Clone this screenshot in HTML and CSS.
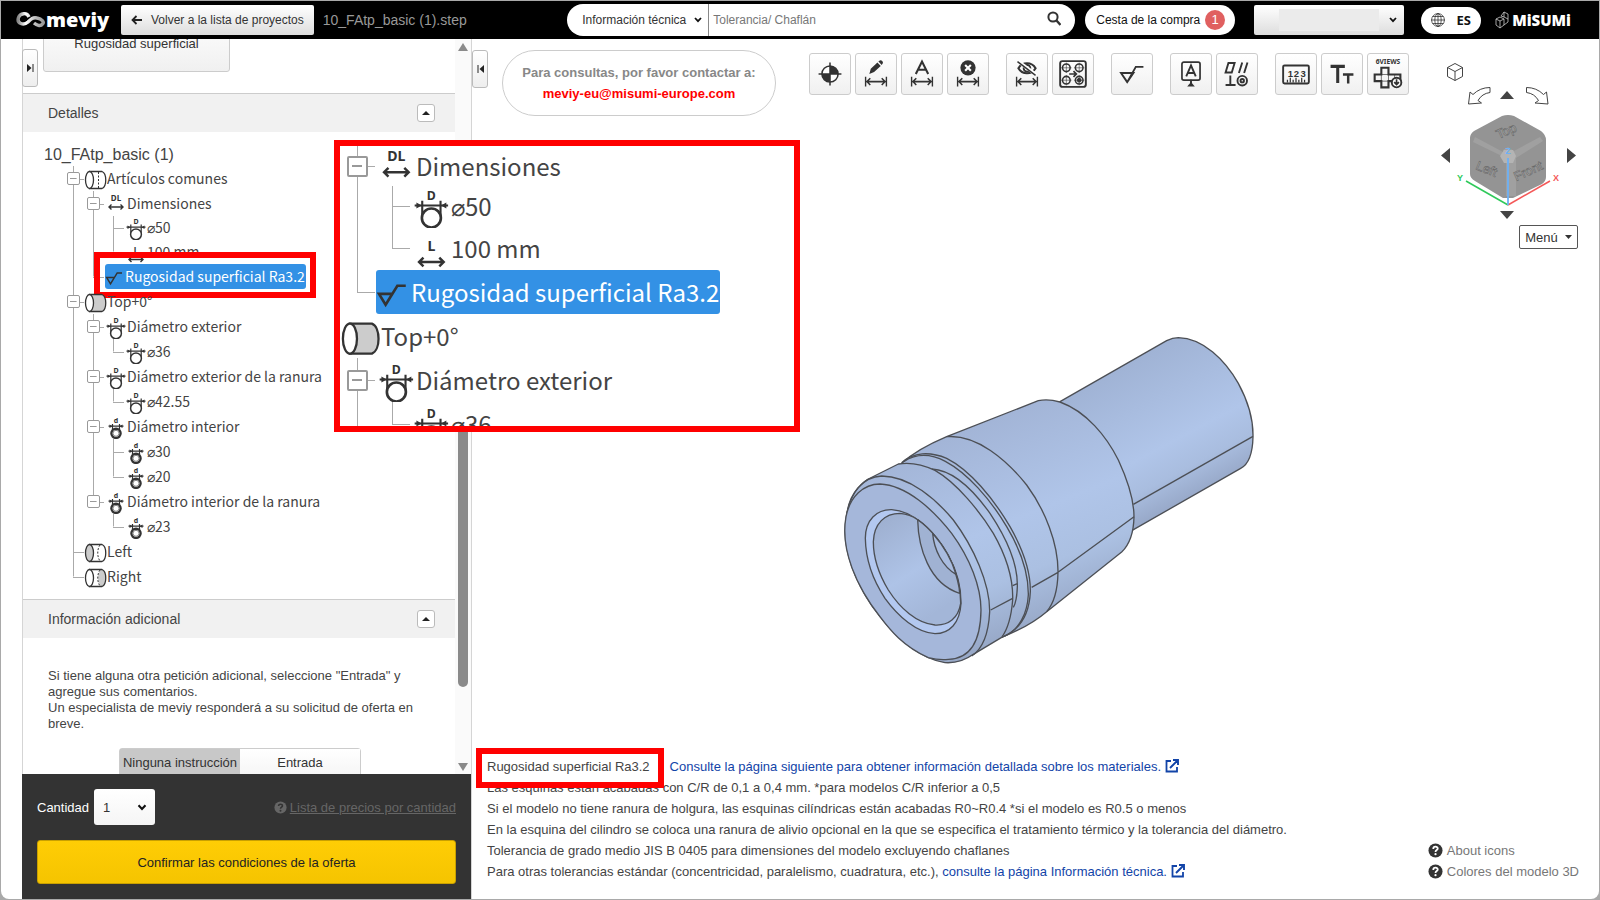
FILE: index.html
```html
<!DOCTYPE html>
<html lang="es">
<head>
    <meta charset="UTF-8">
    <meta name="viewport" content="width=device-width, initial-scale=1.0">
    <title>meviy</title>
    <link rel="stylesheet" href="styles.css">
</head>
<body>
    <!-- shared icons -->
    <svg class="defs" width="0" height="0">
        <defs>
            <symbol id="i-d-out" viewBox="0 0 23 25">
                <text x="12" y="9" class="glyph">D</text>
                <path d="M2.5 12.2h19M6.8 9.5v10M17.2 9.5v10" fill="none" stroke="#333" stroke-width="1.2"/>
                <path d="M3.5 10.5l3 1.7-3 1.7zM20.5 10.5l-3 1.7 3 1.7z" fill="#333"/>
                <circle cx="12" cy="19.3" r="5.4" fill="#fff" stroke="#333" stroke-width="1.5"/>
            </symbol>
            <symbol id="i-d-in" viewBox="0 0 23 25">
                <text x="12" y="9" class="glyph">d</text>
                <path d="M4.5 12.2h15M8.5 10v9M15.5 10v9" fill="none" stroke="#333" stroke-width="1.2"/>
                <path d="M5.5 10.5l3 1.7-3 1.7zM18.5 10.5l-3 1.7 3 1.7z" fill="#333"/>
                <circle cx="12" cy="19.3" r="4.6" fill="#fff" stroke="#333" stroke-width="2.4"/>
                <circle cx="12" cy="19.3" r="3" fill="none" stroke="#888" stroke-width="1"/>
            </symbol>
            <symbol id="i-dl" viewBox="0 0 23 25">
                <text x="12" y="9.5" class="glyph glyph-l">DL</text>
                <path d="M5 16h14M7.5 13.5L5 16l2.5 2.5M16.5 13.5L19 16l-2.5 2.5" fill="none" stroke="#333" stroke-width="1.4"/>
            </symbol>
            <symbol id="i-l" viewBox="0 0 23 25">
                <text x="12" y="14" class="glyph glyph-l">L</text>
                <path d="M5 20.5h14M7.5 18L5 20.5 7.5 23M16.5 18l2.5 2.5-2.5 2.5" fill="none" stroke="#333" stroke-width="1.4"/>
            </symbol>
            <symbol id="i-rough" viewBox="0 0 20 25">
                <path d="M5.5 19.8L1.7 13.6h7.6zL12.2 8.9H17" fill="none" stroke="#333" stroke-width="1.5"/>
            </symbol>
            <symbol id="i-cyl" viewBox="0 0 23 25">
                <path d="M5.5 5.5H18c5 2 5 15 0 17H5.5z" fill="#fff" stroke="#333" stroke-width="1.3"/>
                <path d="M14.5 6v16" stroke="#333" stroke-width="1" stroke-dasharray="2 1.5"/>
                <ellipse cx="5.5" cy="14" rx="4" ry="8.5" fill="#fff" stroke="#333" stroke-width="1.3"/>
            </symbol>
            <symbol id="i-cyl-top" viewBox="0 0 23 25">
                <path d="M5.5 5.5H18c5 2 5 15 0 17H5.5z" fill="#ccc" stroke="#333" stroke-width="1.3"/>
                <ellipse cx="5.5" cy="14" rx="4" ry="8.5" fill="#fff" stroke="#333" stroke-width="1.3"/>
            </symbol>
            <symbol id="i-cyl-left" viewBox="0 0 23 25">
                <path d="M5.5 5.5H18c5 2 5 15 0 17H5.5z" fill="#fff" stroke="#333" stroke-width="1.3"/>
                <path d="M16 6c-3 4-3 12 0 16" fill="none" stroke="#333" stroke-width="1" stroke-dasharray="2 1.5"/>
                <ellipse cx="5.5" cy="14" rx="4" ry="8.5" fill="#ccc" stroke="#333" stroke-width="1.3"/>
            </symbol>
            <symbol id="i-cyl-right" viewBox="0 0 23 25">
                <path d="M5.5 5.5H18c5 2 5 15 0 17H5.5z" fill="#fff"/>
                <ellipse cx="18" cy="14" rx="4" ry="8.5" fill="#ccc"/>
                <path d="M16 6c-3 4-3 12 0 16" fill="none" stroke="#333" stroke-width="1" stroke-dasharray="2 1.5"/>
                <path d="M5.5 5.5H18c5 2 5 15 0 17H5.5z" fill="none" stroke="#333" stroke-width="1.3"/>
                <ellipse cx="5.5" cy="14" rx="4" ry="8.5" fill="#fff" stroke="#333" stroke-width="1.3"/>
            </symbol>
            <symbol id="i-dim" viewBox="0 0 24 12">
                <path d="M1 1v10M23 1v10M2 6h20M6 2.5L2.5 6 6 9.5M18 2.5L21.5 6 18 9.5" fill="none" stroke="#333" stroke-width="1.6"/>
            </symbol>
            <symbol id="i-ext" viewBox="0 0 14 14">
                <path d="M6 2H1.5v10.5H12V8" fill="none" stroke="#1244a8" stroke-width="1.8"/>
                <path d="M5 9l7-7M8 1h5v5" fill="none" stroke="#1244a8" stroke-width="1.9"/>
            </symbol>
            <symbol id="i-help" viewBox="0 0 16 16">
                <circle cx="8" cy="8" r="7.5" fill="currentColor"/>
                <path d="M5.6 6.3c0-3.2 5-3 4.800-.3C10.300 7.600 8 7.500 8 9.500" fill="none" stroke="var(--mark)" stroke-width="1.9"/>
                <circle cx="8" cy="11.9" r="1.2" fill="var(--mark)"/>
            </symbol>
            <symbol id="i-chev" viewBox="0 0 8 6">
                <path d="M1 1l3 3.2L7 1" fill="none" stroke="#111" stroke-width="1.8"/>
            </symbol>
        </defs>
    </svg>

    <div class="window">
        <header class="topbar">
            <div class="logo">
                <svg width="30" height="18" viewBox="0 0 30 18">
                    <defs>
                        <linearGradient id="silver" x1="0" x2="1">
                            <stop offset="0" stop-color="#888"/>
                            <stop offset=".3" stop-color="#fff"/>
                            <stop offset=".7" stop-color="#bbb"/>
                            <stop offset="1" stop-color="#999"/>
                        </linearGradient>
                    </defs>
                    <path d="M13 6C11 1 4 2 2.500 6.500c-2 6 5 8.500 9.500 4.500 3-3 5-5 9-4 5 1 7.500 4 5.500 6-2 3-6 1-8.500-1" fill="none" stroke="url(#silver)" stroke-width="3.4"/>
                </svg>
                <span>meviy</span>
            </div>
            <button class="back">
                <svg width="11" height="10" viewBox="0 0 11 10"><path d="M11 5H2M5.5 1L1.5 5l4 4" fill="none" stroke="#222" stroke-width="1.8"/></svg>
                Volver a la lista de proyectos
            </button>
            <span class="file">10_FAtp_basic (1).step</span>
            <form class="search">
                <div class="pick">
                    <select aria-label="Categoría"><option>Información técnica</option></select>
                    <svg width="8" height="6"><use href="#i-chev"/></svg>
                </div>
                <input type="text" placeholder="Tolerancia/ Chaflán" aria-label="Buscar">
                <button type="button" aria-label="Buscar">
                    <svg width="14" height="15" viewBox="0 0 14 15"><circle cx="6" cy="6" r="4.6" fill="none" stroke="#333" stroke-width="2"/><path d="M9.5 9.5l4 4.5" stroke="#333" stroke-width="2.4"/></svg>
                </button>
            </form>
            <button class="cart">Cesta de la compra <span class="badge">1</span></button>
            <div class="account">
                <select aria-label="Cuenta"><option></option></select>
                <span class="blank"></span>
                <svg width="8" height="6"><use href="#i-chev"/></svg>
            </div>
            <button class="lang">
                <svg width="14" height="14" viewBox="0 0 14 14" fill="none" stroke="#333" stroke-width=".8"><circle cx="7" cy="7" r="6.4"/><ellipse cx="7" cy="7" rx="3.2" ry="6.4"/><path d="M7 0v14M0 7h14M1.5 3.5h11M1.5 10.5h11"/></svg>
                ES
            </button>
            <div class="brand">
                <svg width="14" height="18" viewBox="0 0 14 18" fill="none" stroke="#ccc" stroke-width=".8"><path d="M1 8l4-2 4 2v6l-4 3-4-3zM1 8l4 2 4-2M5 10v7M6 5l3-4 4 2v8l-4 3M9 1v5l4 2M6 5l3 1"/></svg>
                <span>MiSUMi</span>
            </div>
        </header>

        <div class="page">
            <aside class="sidebar">
                <button class="tab tab-left" aria-label="Abrir panel">
                    <svg width="7" height="10" viewBox="0 0 7 10"><path d="M0 1l4.500 4L0 9z" fill="#222"/><path d="M6 1v8" stroke="#222"/></svg>
                </button>
                <div class="scroll">
                    <div class="content">
                        <button class="rough">Rugosidad superficial</button>

                        <section>
                            <div class="bar">
                                <h2>Detalles</h2>
                                <button class="fold" aria-label="Plegar detalles"><svg width="8" height="4" viewBox="0 0 8 4"><path d="M0 4l4-4 4 4z" fill="#222"/></svg></button>
                            </div>
                            <div class="tree">
                                <h3>10_FAtp_basic (1)</h3>
                                <div class="row"><i class="v box"></i><svg class="ic"><use href="#i-cyl"/></svg>Artículos comunes</div>
                                <div class="row"><i class="v"></i><i class="v box"></i><svg class="ic"><use href="#i-dl"/></svg>Dimensiones</div>
                                <div class="row short"><i class="v"></i><i class="v"></i><i class="v tee"></i><svg class="ic"><use href="#i-d-out"/></svg>⌀50</div>
                                <div class="row"><i class="v"></i><i class="v"></i><i class="end tee"></i><svg class="ic"><use href="#i-l"/></svg>100 mm</div>
                                <div class="row mark"><i class="v"></i><i class="end tee"></i><span class="sel"><svg class="ic"><use href="#i-rough"/></svg>Rugosidad superficial Ra3.2</span></div>
                                <div class="row"><i class="v box"></i><svg class="ic"><use href="#i-cyl-top"/></svg>Top+0°</div>
                                <div class="row"><i class="v"></i><i class="v box"></i><svg class="ic"><use href="#i-d-out"/></svg>Diámetro exterior</div>
                                <div class="row"><i class="v"></i><i class="v"></i><i class="end tee"></i><svg class="ic"><use href="#i-d-out"/></svg>⌀36</div>
                                <div class="row"><i class="v"></i><i class="v box"></i><svg class="ic"><use href="#i-d-out"/></svg>Diámetro exterior de la ranura</div>
                                <div class="row"><i class="v"></i><i class="v"></i><i class="end tee"></i><svg class="ic"><use href="#i-d-out"/></svg>⌀42.55</div>
                                <div class="row"><i class="v"></i><i class="v box"></i><svg class="ic"><use href="#i-d-in"/></svg>Diámetro interior</div>
                                <div class="row"><i class="v"></i><i class="v"></i><i class="v tee"></i><svg class="ic"><use href="#i-d-in"/></svg>⌀30</div>
                                <div class="row"><i class="v"></i><i class="v"></i><i class="end tee"></i><svg class="ic"><use href="#i-d-in"/></svg>⌀20</div>
                                <div class="row"><i class="v"></i><i class="end box"></i><svg class="ic"><use href="#i-d-in"/></svg>Diámetro interior de la ranura</div>
                                <div class="row"><i class="v"></i><i></i><i class="end tee"></i><svg class="ic"><use href="#i-d-in"/></svg>⌀23</div>
                                <div class="row"><i class="v tee"></i><svg class="ic"><use href="#i-cyl-left"/></svg>Left</div>
                                <div class="row"><i class="end tee"></i><svg class="ic"><use href="#i-cyl-right"/></svg>Right</div>
                            </div>
                        </section>

                        <section>
                            <div class="bar">
                                <h2>Información adicional</h2>
                                <button class="fold" aria-label="Plegar información"><svg width="8" height="4" viewBox="0 0 8 4"><path d="M0 4l4-4 4 4z" fill="#222"/></svg></button>
                            </div>
                            <div class="extra">
                                <p>Si tiene alguna otra petición adicional, seleccione "Entrada" y agregue sus comentarios.<br>Un especialista de meviy responderá a su solicitud de oferta en breve.</p>
                                <div class="switch">
                                    <button class="on">Ninguna instrucción</button>
                                    <button>Entrada</button>
                                </div>
                            </div>
                        </section>
                    </div>
                    <div class="scrollbar">
                        <svg width="10" height="8" viewBox="0 0 10 8"><path d="M5 0l5 8H0z" fill="#8a8a8a"/></svg>
                        <div class="thumb"></div>
                        <svg width="10" height="8" viewBox="0 0 10 8"><path d="M5 8L0 0h10z" fill="#8a8a8a"/></svg>
                    </div>
                </div>
                <div class="order">
                    <div class="qty">
                        <label for="qty">Cantidad</label>
                        <div class="amount">
                            <select id="qty"><option>1</option></select>
                            <svg width="10" height="7"><use href="#i-chev"/></svg>
                        </div>
                        <svg class="help" width="13" height="13"><use href="#i-help"/></svg>
                        <a href="#">Lista de precios por cantidad</a>
                    </div>
                    <button class="confirm">Confirmar las condiciones de la oferta</button>
                </div>
            </aside>

            <main class="viewer">
                <div class="tools">
                    <button class="tab" aria-label="Cerrar panel">
                        <svg width="7" height="10" viewBox="0 0 7 10"><path d="M7 1L2.500 5 7 9z" fill="#222"/><path d="M1 1v8" stroke="#222"/></svg>
                    </button>
                    <div class="contact">
                        Para consultas, por favor contactar a:
                        <a href="#">meviy-eu@misumi-europe.com</a>
                    </div>
                    <div class="toolbar">
                        <div class="group">
                            <button aria-label="Origen"><svg viewBox="0 0 42 42"><circle cx="21" cy="21" r="8.5" fill="#fff" stroke="#333" stroke-width="1.6"/><path d="M21 21v-8.500a8.500 8.500 0 0 1 8.500 8.500zM21 21v8.500a8.500 8.500 0 0 1-8.500-8.500z" fill="#333"/><path d="M21 9v24M9 21h24" stroke="#333" stroke-width="1.6"/></svg></button>
                            <button aria-label="Editar cota"><svg viewBox="0 0 42 42"><use href="#i-dim" x="9" y="23" width="24" height="12"/><path d="M14 21l1.500-5.500 7-6.500 3.500 3.500-7 6.500zM23.500 8l1.500-1.200q1.500-.5 2.500.5t.8 2.200L27 11.500z" fill="#333"/></svg></button>
                            <button aria-label="Texto de cota"><svg viewBox="0 0 42 42"><use href="#i-dim" x="9" y="23" width="24" height="12"/><path d="M14.500 21L21 8l6.500 13M17 16.500h8" fill="none" stroke="#333" stroke-width="2.2"/></svg></button>
                            <button aria-label="Borrar cota"><svg viewBox="0 0 42 42"><use href="#i-dim" x="9" y="23" width="24" height="12"/><circle cx="21" cy="14.5" r="8" fill="#333"/><path d="M18 11.500l6 6M24 11.500l-6 6" stroke="#fff" stroke-width="2.2"/></svg></button>
                        </div>
                        <div class="group">
                            <button aria-label="Ocultar cota"><svg viewBox="0 0 42 42"><use href="#i-dim" x="9" y="23" width="24" height="12"/><path d="M12 15c4-7 14-7 18 0-4 7-14 7-18 0z" fill="none" stroke="#333" stroke-width="2.2"/><circle cx="21" cy="15" r="3.5" fill="none" stroke="#333" stroke-width="2"/><path d="M12 8l19 14" stroke="#fff" stroke-width="3.5"/><path d="M11 8l19 14.500" stroke="#333" stroke-width="1.5"/></svg></button>
                            <button aria-label="Agujeros"><svg viewBox="0 0 42 42" fill="none" stroke="#333"><rect x="7.5" y="7.5" width="27" height="27" rx="2.5" stroke-width="2"/><g stroke-width="1.6"><circle cx="14" cy="14.5" r="4"/><circle cx="27.5" cy="14.5" r="4"/><circle cx="14" cy="27.5" r="4"/><circle cx="27.5" cy="27.5" r="4"/></g><circle cx="27.5" cy="27.5" r="2" fill="#333"/><path d="M8.500 14.500h11M14 9v11M22 14.500h11M27.500 9v11M8.500 27.500h11M14 22v11M22 27.500h11M27.500 22v11" stroke-width=".6"/><path d="M17 21h7M21.500 18l3 3-3 3" stroke-width="1.8"/></svg></button>
                        </div>
                        <div class="group">
                            <button aria-label="Rugosidad"><svg viewBox="0 0 42 42"><path d="M16 29.500L9.500 20h13zL25 13.500h8" fill="none" stroke="#333" stroke-width="2"/></svg></button>
                        </div>
                        <div class="group">
                            <button aria-label="Referencia"><svg viewBox="0 0 42 42" fill="none" stroke="#333"><rect x="11.5" y="8.5" width="19" height="19" rx="2" stroke-width="1.8"/><path d="M16 23.500l5-11.500 5 11.500M17.500 20h7" stroke-width="2"/><path d="M21 27v4" stroke-width="2"/><path d="M17 34l4-4.500 4 4.500z" fill="#333" stroke="none"/></svg></button>
                            <button aria-label="Tolerancia geométrica"><svg viewBox="0 0 42 42" fill="none" stroke="#333" stroke-width="2"><path d="M9 19.500l3-10h6.500l-3 10zM23 20l3.500-11M28.500 20L32 9M9 32.500h10.500M14 22.500v10"/><circle cx="26.5" cy="28" r="5"/><circle cx="26.5" cy="28" r="1.8"/></svg></button>
                        </div>
                        <div class="group">
                            <button aria-label="Medir"><svg viewBox="0 0 42 42"><rect x="7.5" y="12" width="27" height="19" rx="1.5" fill="none" stroke="#333" stroke-width="2"/><text x="15" y="24" class="num">1</text><text x="21.5" y="24" class="num">2</text><text x="28.500" y="24" class="num">3</text><path d="M12 30v-3M15 30v-5M18 30v-3M21 30v-5M24 30v-3M27 30v-5M30 30v-3" stroke="#333" stroke-width="1.3"/></svg></button>
                            <button aria-label="Texto"><svg viewBox="0 0 42 42" fill="none" stroke="#333"><path d="M9 13h15M16.500 13v17.500" stroke-width="3.2"/><path d="M22 21.500h11M27.500 21.500v9.500" stroke-width="2.6"/></svg></button>
                            <button aria-label="Seis vistas"><svg viewBox="0 0 42 42" fill="none" stroke="#333"><text x="21" y="11" class="views">6VIEWS</text><path d="M14 14.500h7.500v7H34v7H21.500V35H14v-6.500H7v-7h7z" stroke-width="2.2"/><path d="M14 21.500h7.500v7H14zM28 21.500v7" stroke-width=".7"/><circle cx="30" cy="30" r="5" fill="#fff" stroke-width="2"/><path d="M30 26.500v5.500M27.500 29.500L30 32l2.500-2.500" stroke-width="1.8"/></svg></button>
                        </div>
                    </div>
                    <div class="nav">
                        <svg width="150" height="164" viewBox="1435 57 150 164">
                            <path d="M1455 63.500l7.500 4v9l-7.500 4-7.500-4v-9zM1447.500 67.500l7.500 4 7.500-4M1455 71.500v9" fill="#fff" stroke="#444"/>
                            <path d="M1490 87.500v5q-8 1-12 8l3.500 2.500-13 1 1.500-12 3 2.500q7-7 17-7zM1526.500 87.500v5q8 1 12 8l-3.500 2.500 13 1-1.500-12-3 2.500q-7-7-17-7z" fill="#fff" stroke="#444"/>
                            <path d="M1500 99l7-8 7 8zM1500 211h14l-7 8zM1450 148v15l-9-7.500zM1567 148v15l9-7.500z" fill="#444"/>
                            <path d="M1502 116q6-2 12 0l27 15q5 4 5 9v37q0 4-4 7l-29 14h-10l-28-17q-5-3-5-7v-36q0-4 4-7z" fill="#949494"/>
                            <path d="M1475 137l28 15v-2l5-3 6 4 26-14 3 4-27 17v38h-10v-38l-33-16z" fill="#a0a0a0"/>
                            <path d="M1504 150l9 0 3 6-3 7h-9l-4-7z" fill="#b4b4b4"/>
                            <g class="face">
                                <text transform="translate(1508 135) rotate(-24)">Top</text>
                                <text transform="translate(1485 173) rotate(22)">Left</text>
                                <text transform="translate(1530 175) rotate(-24)">Front</text>
                            </g>
                            <path d="M1508 205l-42-24" stroke="#2fc95a" stroke-width="1.5"/>
                            <path d="M1508 205l42-24" stroke="#f45858" stroke-width="1.5"/>
                            <path d="M1508 205v-47" stroke="#6db1f5" stroke-width="1.8"/>
                            <text x="1460" y="181" class="axis" fill="#2fc95a">Y</text>
                            <text x="1556" y="181" class="axis" fill="#f45858">X</text>
                            <text x="1508" y="154" class="axis" fill="#6db1f5">Z</text>
                        </svg>
                        <button class="menu">Menú <svg width="7" height="4" viewBox="0 0 7 4"><path d="M0 0h7L3.500 4z" fill="#333"/></svg></button>
                    </div>
                </div>

                <div class="canvas">
                    <svg width="460" height="360" viewBox="0 0 1380 1080" fill="none" stroke="#4c4f55" stroke-width="4" stroke-linejoin="round">
                        <defs>
                            <linearGradient id="body" gradientUnits="userSpaceOnUse" x1="400" y1="330" x2="640" y2="920">
                                <stop offset="0" stop-color="#a2b4d6"/>
                                <stop offset=".5" stop-color="#b0c5e9"/>
                                <stop offset=".75" stop-color="#abc0e2"/>
                                <stop offset="1" stop-color="#98a9c8"/>
                            </linearGradient>
                            <linearGradient id="tail" gradientUnits="userSpaceOnUse" x1="880" y1="155" x2="1090" y2="550">
                                <stop offset="0" stop-color="#a0b3d5"/>
                                <stop offset=".6" stop-color="#b0c5e9"/>
                                <stop offset=".8" stop-color="#a9bddf"/>
                                <stop offset="1" stop-color="#97a8c8"/>
                            </linearGradient>
                            <linearGradient id="bore" x1="0" y1="0" x2=".5" y2="1">
                                <stop offset="0" stop-color="#9cadcd"/>
                                <stop offset=".6" stop-color="#aec3e7"/>
                                <stop offset="1" stop-color="#a3b6d8"/>
                            </linearGradient>
                        </defs>
                        <!-- rear shaft -->
                        <path d="M720 245L1040 62Q1058 53 1075 53C1150 55 1215 120 1255 190C1285 245 1300 300 1299 350C1298 400 1285 433 1262 445L930 635Z" fill="url(#tail)"/>
                        <path d="M940 553L1299 349"/>
                        <!-- tapered body and collar -->
                        <path d="M245 430Q290 388 380 350L655 242Q685 236 720 246C800 275 860 350 895 420C925 485 942 540 942 590C941 640 930 672 905 696L680 875Q630 918 545 952Z" fill="url(#body)"/>
                        <path d="M380 350C470 342 560 420 620 495C675 570 715 670 714 757C713 810 702 850 680 875M635 802L714 757L942 590"/>
                        <path d="M245 428C280 396 330 394 380 415C450 450 520 535 570 620C610 690 632 760 631 815C628 880 600 930 545 952"/>
                        <path d="M252 424C290 400 330 400 376 424C440 458 510 535 560 620C605 695 626 760 625 825C622 880 598 928 555 948"/>
                        <path d="M335 447C400 450 460 510 510 580C560 655 594 730 592 800C591 830 587 850 580 862M578 797L592 791"/>
                        <!-- front ring -->
                        <path d="M145 477L235 432C270 426 305 432 345 451C410 488 480 575 520 640C560 710 580 780 578 840C574 890 565 925 545 952L460 1003C430 1025 405 1030 375 1028C300 1015 230 955 180 890C120 815 78 720 75 640C76 560 100 505 145 477Z" fill="url(#body)"/>
                        <path d="M80 590C85 520 130 470 185 468C270 468 350 540 400 600C460 680 510 790 509 875C506 935 490 985 455 1008"/>
                        <path d="M78 590C90 530 130 492 180 492C260 495 340 570 395 640C450 715 483 800 483 870C482 950 460 1016 385 1018C365 1020 345 1018 325 1013C250 980 210 930 180 890C110 800 60 690 78 590Z" fill="#a5b7da"/>
                        <path d="M512 870L578 835"/>
                        <!-- bore -->
                        <path d="M136 655C136 600 170 568 215 569C280 572 345 635 385 705C412 755 424 800 423 850C420 910 388 941 345 941C290 938 235 890 195 835C155 775 137 715 136 655Z" fill="#b3c8f0"/>
                        <path d="M160 665C162 610 195 580 240 580Q270 582 293 599C345 640 375 685 398 735Q422 790 422 850C415 895 385 917 345 915C290 910 240 865 205 810C175 760 160 710 160 665Z" fill="url(#bore)"/>
                        <path d="M293 599C295 680 325 790 419 820Q418 790 398 735C375 685 345 635 293 599Z" fill="#a0b2d3"/>
                        <path d="M338 640C342 690 368 740 408 763Q390 700 338 640Z" fill="#a9bcdf"/>
                    </svg>
                </div>

                <div class="bottom">
                    <div class="notes">
                        <p><span class="noted">Rugosidad superficial Ra3.2</span><a href="#">Consulte la página siguiente para obtener información detallada sobre los materiales. <svg width="14" height="14"><use href="#i-ext"/></svg></a></p>
                        <p>Las esquinas están acabadas con C/R de 0,1 a 0,4 mm. *para modelos C/R inferior a 0,5</p>
                        <p>Si el modelo no tiene ranura de holgura, las esquinas cilíndricas están acabadas R0~R0.4 *si el modelo es R0.5 o menos</p>
                        <p>En la esquina del cilindro se coloca una ranura de alivio opcional en la que se especifica el tratamiento térmico y la tolerancia del diámetro.</p>
                        <p>Tolerancia de grado medio JIS B 0405 para dimensiones del modelo excluyendo chaflanes</p>
                        <p>Para otras tolerancias estándar (concentricidad, paralelismo, cuadratura, etc.), <a href="#">consulte la página Información técnica. <svg width="14" height="14"><use href="#i-ext"/></svg></a></p>
                    </div>
                    <div class="links">
                        <a href="#"><svg width="15" height="15"><use href="#i-help"/></svg>About icons</a>
                        <a href="#"><svg width="15" height="15"><use href="#i-help"/></svg>Colores del modelo 3D</a>
                    </div>
                </div>
            </main>
        </div>

        <!-- magnified part of the tree -->
        <div class="callout tree big">
            <div class="row short"><i class="v box"></i><svg class="ic"><use href="#i-dl"/></svg>Dimensiones</div>
            <div class="row short"><i class="v"></i><i class="v tee"></i><svg class="ic"><use href="#i-d-out"/></svg>⌀50</div>
            <div class="row"><i class="v"></i><i class="end tee"></i><svg class="ic"><use href="#i-l"/></svg>100 mm</div>
            <div class="row"><i class="end tee"></i><span class="sel"><svg class="ic"><use href="#i-rough"/></svg>Rugosidad superficial Ra3.2</span></div>
            <div class="row"><svg class="ic"><use href="#i-cyl-top"/></svg>Top+0°</div>
            <div class="row"><i class="v box"></i><svg class="ic"><use href="#i-d-out"/></svg>Diámetro exterior</div>
            <div class="row"><i class="v"></i><i class="end tee"></i><svg class="ic"><use href="#i-d-out"/></svg>⌀36</div>
        </div>
    </div>
</body>
</html>
```
FILE: styles.css
```css
*,
*::before,
*::after {
    box-sizing: border-box;
}

body {
    margin: 0;
    background: #a9a9a9;
    font-family: "Liberation Sans", Arial, sans-serif;
    font-size: 13px;
    color: #444;
}

h2, h3, p {
    margin: 0;
    font-weight: normal;
}

a {
    color: #1244a8;
    text-decoration: none;
}

button, select, input {
    font: inherit;
    color: #333;
    margin: 0;
    padding: 0;
    border: 0;
    background: none;
}

select {
    appearance: none;
    width: 100%;
    height: 100%;
}

svg {
    flex: none;
}

.defs {
    position: absolute;
}

.window {
    position: relative;
    display: flex;
    flex-direction: column;
    height: calc(100vh - 2px);
    margin: 1px;
    overflow: hidden;
    background: #fff;
    border-radius: 0 0 8px 8px;
}

/* top bar */
.topbar {
    display: flex;
    align-items: center;
    height: 38px;
    flex: none;
    padding: 0 28px 0 15px;
    background: #000;
    font-size: 12px;
}

.logo {
    display: flex;
    align-items: center;
    width: 105px;
    color: #fff;
    font-family: "Open Sans", sans-serif;
    font-size: 20px;
    font-weight: 800;
    line-height: 30px;
}

.back {
    display: flex;
    align-items: center;
    gap: 9px;
    height: 30px;
    padding: 0 10px;
    border-radius: 2px;
    background: linear-gradient(#fff, #ddd);
    white-space: nowrap;
}

.file {
    padding-left: 9px;
    color: #999;
    font-size: 14px;
    white-space: nowrap;
}

.search {
    display: flex;
    align-items: center;
    width: 508px;
    height: 32px;
    margin-left: auto;
    padding-right: 14px;
    border-radius: 16px;
    background: #fff;
}

.pick {
    display: flex;
    align-items: center;
    width: 142px;
    height: 100%;
    padding: 0 6px 0 15px;
    border-right: 1px solid #888;
}

.search input {
    flex: 1;
    padding-left: 4px;
    outline: 0;
}

.search input::placeholder {
    color: #777;
}

.cart {
    display: flex;
    align-items: center;
    justify-content: space-between;
    width: 150px;
    height: 30px;
    margin-left: 10px;
    padding: 0 10px 0 11px;
    border-radius: 15px;
    background: #fff;
    color: #111;
    white-space: nowrap;
}

.badge {
    width: 20px;
    border-radius: 10px;
    background: #e06060;
    color: #fff;
    font-size: 13px;
    line-height: 20px;
    text-align: center;
}

.account {
    display: flex;
    align-items: center;
    width: 150px;
    height: 30px;
    margin-left: 19px;
    padding-right: 7px;
    border-radius: 2px;
    background: linear-gradient(#fff, #ddd);
}

.account select {
    flex: none;
    width: 25px;
}

.blank {
    flex: none;
    width: 100px;
    height: 22px;
    margin-right: auto;
    background: #ebebeb;
}

.lang {
    display: flex;
    align-items: center;
    justify-content: center;
    gap: 11px;
    width: 60px;
    height: 27px;
    margin-left: 17px;
    border-radius: 14px;
    background: #fff;
    color: #111;
    font-family: "Noto Sans", sans-serif;
    font-size: 13px;
    font-weight: bold;
}

.brand {
    display: flex;
    align-items: center;
    gap: 3px;
    margin-left: 14px;
    color: #fff;
    font-family: "Open Sans", sans-serif;
    font-size: 15px;
    font-weight: 800;
}

.page {
    display: flex;
    flex: 1;
    min-height: 0;
}

/* sidebar */
.sidebar {
    position: relative;
    display: flex;
    flex-direction: column;
    width: 450px;
    flex: none;
    margin-left: 21px;
    border-left: 1px solid #d5d5d5;
    border-right: 1px solid #d5d5d5;
}

.tab {
    display: flex;
    align-items: center;
    justify-content: center;
    flex: none;
    width: 16px;
    height: 38px;
    border: 1px solid #bbb;
    border-radius: 3px;
    background: linear-gradient(#fff, #eee);
}

.tab-left {
    position: absolute;
    top: 10px;
    left: -1px;
}

.scroll {
    display: flex;
    flex: 1;
    min-height: 0;
    overflow: hidden;
}

.content {
    flex: 1;
    margin-top: -25px;
}

.rough {
    display: block;
    width: 187px;
    height: 58px;
    margin: 0 0 21px 20px;
    border: 1px solid #ccc;
    border-radius: 3px;
    background: linear-gradient(#fff, #f0f0f0);
}

.bar {
    display: flex;
    align-items: center;
    justify-content: space-between;
    height: 39px;
    padding: 0 20px 0 25px;
    border-top: 1px solid #ccc;
    background: #f1f1f1;
}

.bar h2 {
    font-size: 14px;
}

.fold {
    display: flex;
    align-items: center;
    justify-content: center;
    width: 18px;
    height: 18px;
    border: 1px solid #bbb;
    border-radius: 3px;
    background: #fff;
}

.extra {
    padding: 30px 24px 0 25px;
    line-height: 16px;
}

.switch {
    display: flex;
    width: 242px;
    height: 40px;
    margin: 16px 0 0 71px;
    border: 1px solid #ccc;
    border-radius: 3px;
}

.switch button {
    flex: 1;
    height: 28px;
    white-space: nowrap;
    background: linear-gradient(#fff, #f5f5f5);
}

.switch .on {
    background: #c8c8c8;
}

.scrollbar {
    display: flex;
    flex-direction: column;
    align-items: center;
    width: 16px;
    padding: 4px 0 3px;
    background: #fafafa;
}

.thumb {
    width: 10px;
    flex: 1;
    margin: 260px 0 76px;
    border-radius: 5px;
    background: #8a8a8a;
}

.order {
    height: 125px;
    flex: none;
    margin: 0 0 0 -1px;
    padding: 15px 15px 0;
    background: #333;
}

.qty {
    display: flex;
    align-items: center;
    color: #fff;
}

.amount {
    display: flex;
    align-items: center;
    width: 61px;
    height: 36px;
    margin: 0 auto 0 5px;
    padding: 0 8px 0 9px;
    border-radius: 3px;
    background: linear-gradient(#fff, #f5f5f5);
}

.help {
    --mark: #333;
    margin-right: 3px;
    color: #666;
}

.qty a {
    color: #666;
    text-decoration: underline;
}

.confirm {
    display: block;
    width: 100%;
    height: 44px;
    margin-top: 15px;
    border: 1px solid #c9a000;
    border-radius: 3px;
    background: linear-gradient(#ffcd05, #f5c400);
    color: #222;
}

/* tree */
.tree {
    --row: 25px;
    --cell: 20px;
    --icon: 23px;
    --mid: 9px;
    --toggle: 13px;
    padding: 12px 0 10px 41px;
    font-family: "Noto Sans CJK JP", sans-serif;
    font-size: 14px;
}

.tree h3 {
    margin-left: -20px;
    font-family: "Liberation Sans", Arial, sans-serif;
    font-size: 16px;
    line-height: 22px;
}

.row {
    position: relative;
    display: flex;
    align-items: center;
    height: var(--row);
    line-height: var(--row);
    white-space: nowrap;
}

.row.short {
    height: 23px;
}

.row i {
    position: relative;
    flex: none;
    width: var(--cell);
    height: 100%;
}

.row .v {
    background: linear-gradient(#aaa, #aaa) var(--mid) 0 / 1px 100% no-repeat;
}

.row .end {
    background: linear-gradient(#aaa, #aaa) var(--mid) 0 / 1px 50% no-repeat;
}

.row .tee::after,
.row .box::after {
    content: "";
    position: absolute;
    top: 50%;
    left: var(--mid);
    right: 0;
    height: 1px;
    background: #aaa;
}

.row .box::before {
    content: "";
    position: absolute;
    z-index: 1;
    top: calc(50% - var(--toggle) / 2);
    left: calc(var(--mid) - var(--toggle) / 2);
    width: var(--toggle);
    height: var(--toggle);
    border: 1px solid #999;
    border-radius: 2px;
    background: linear-gradient(#999, #999) center / 60% 1px no-repeat #fff;
}

.ic {
    width: var(--icon);
    height: var(--row);
    overflow: visible;
}

.sel {
    display: flex;
    padding-right: 1px;
    margin-left: 1px;
    border-radius: 3px;
    background: #3391e5;
    color: #fff;
}

.sel .ic {
    width: var(--cell);
}

.mark::after {
    content: "";
    position: absolute;
    top: -12px;
    left: 30px;
    width: 222px;
    height: 46px;
    border: 6px solid #f00;
}

.callout {
    position: absolute;
    top: 139px;
    left: 333px;
    width: 466px;
    height: 292px;
    overflow: hidden;
    border: 6px solid #f00;
    background: #fff;
}

.tree.big {
    --row: 44px;
    --cell: 35px;
    --icon: 41px;
    --mid: 17px;
    --toggle: 21px;
    padding: 0;
    font-size: 24px;
}

.big .row.short {
    height: 40px;
}

.big .row .box::before {
    border-width: 2px;
    background-size: 60% 2px;
}

/* viewer */
.viewer {
    display: flex;
    flex-direction: column;
    flex: 1;
    min-width: 0;
}

.tools {
    display: flex;
    align-items: flex-start;
    padding: 11px 14px 0 0;
}

.contact {
    width: 274px;
    height: 66px;
    margin-left: 14px;
    padding-top: 11px;
    border: 1px solid #ccc;
    border-radius: 33px;
    color: #888;
    font-weight: bold;
    line-height: 21px;
    text-align: center;
    white-space: nowrap;
}

.contact a {
    display: block;
    color: #f00;
}

.toolbar {
    display: flex;
    gap: 17px;
    margin: 3px 26px 0 auto;
}

.group {
    display: flex;
    gap: 4px;
}

.group button {
    width: 42px;
    height: 42px;
    border: 1px solid #ccc;
    border-radius: 3px;
    background: linear-gradient(#fff, #f0f0f0);
}

.group svg {
    display: block;
    width: 40px;
    height: 40px;
}

.glyph {
    font: bold 7px "Noto Sans", sans-serif;
    fill: #333;
    text-anchor: middle;
}

.glyph-l {
    font-size: 8px;
}

.num {
    font: bold 10px "Liberation Sans", Arial, sans-serif;
    fill: #333;
    text-anchor: middle;
}

.views {
    font: bold 7px "Noto Sans", sans-serif;
    fill: #333;
    stroke: none;
    text-anchor: middle;
}

.nav {
    display: flex;
    flex-direction: column;
    align-items: flex-end;
    padding-top: 7px;
}

.face text {
    font: 13px "Liberation Sans", Arial, sans-serif;
    fill: #bbb;
    stroke: #666;
    stroke-width: .6px;
    text-anchor: middle;
}

.axis {
    font: bold 9px "Liberation Sans", Arial, sans-serif;
    text-anchor: middle;
}

.menu {
    display: flex;
    align-items: center;
    justify-content: center;
    gap: 7px;
    width: 59px;
    height: 24px;
    margin: 4px 7px 0 0;
    border: 1px solid #555;
    border-radius: 2px;
    background: #fff;
}

.canvas {
    display: flex;
    flex: 1;
    align-items: center;
    justify-content: center;
    padding: 0 0 6px 29px;
}

.bottom {
    display: flex;
    align-items: flex-end;
    justify-content: space-between;
    padding: 0 20px 17px 15px;
    line-height: 21px;
    white-space: nowrap;
}

.notes svg {
    vertical-align: -2px;
}

.noted {
    position: relative;
    margin-right: 20px;
}

.noted::after {
    content: "";
    position: absolute;
    top: -11px;
    left: -11px;
    right: -14px;
    height: 40px;
    border: 6px solid #f00;
}

.links a {
    --mark: #fff;
    display: flex;
    align-items: center;
    gap: 4px;
    color: #777;
}

.links svg {
    color: #333;
}
```
